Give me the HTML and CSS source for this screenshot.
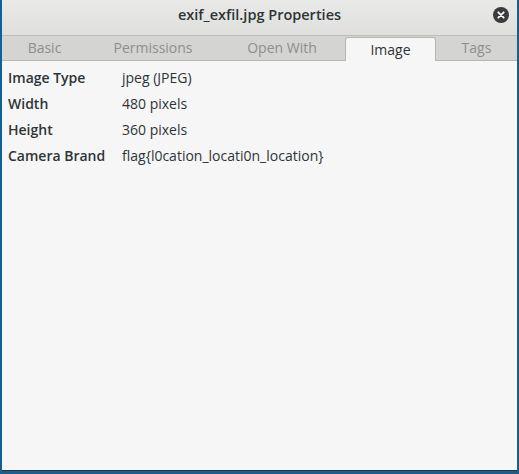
FILE: index.html
```html
<!DOCTYPE html>
<html>
<head>
<meta charset="utf-8">
<link rel="stylesheet" href="styles.css">
</head>
<body>
<div class="window">
  <div class="titlebar">
    <span class="title">exif_exfil.jpg Properties</span>
    <span class="close">
      <svg width="16" height="16" viewBox="0 0 16 16"><circle cx="8" cy="8" r="8" fill="#393b3c"/><path d="M5.3 5.3 L10.7 10.7 M10.7 5.3 L5.3 10.7" stroke="#fff" stroke-width="1.8" stroke-linecap="round"/></svg>
    </span>
  </div>
  <div class="tabs">
    <div class="tab tab-basic">Basic</div>
    <div class="tab tab-perm">Permissions</div>
    <div class="tab tab-open">Open With</div>
    <div class="tab tab-image active">Image</div>
    <div class="tab tab-tags">Tags</div>
  </div>
  <div class="content">
    <div class="grid">
      <div class="label">Image Type</div><div class="value">jpeg (JPEG)</div>
      <div class="label">Width</div><div class="value">480 pixels</div>
      <div class="label">Height</div><div class="value">360 pixels</div>
      <div class="label">Camera Brand</div><div class="value">flag{l0cation_locati0n_location}</div>
    </div>
  </div>
</div>
</body>
</html>
```

FILE: styles.css
```css
html, body {
  margin: 0;
  padding: 0;
  height: 474px;
  overflow: hidden;
}
body {
  background: #1a5f8c;
  font-family: "Open Sans", "Noto Sans", sans-serif;
  color: #2e3436;
  display: flex;
  flex-direction: column;
}
.window {
  margin: 0 2px 0 2px;
  height: 471px;
  display: flex;
  flex-direction: column;
  background: #f6f6f6;
  border-bottom: 1px solid #0f3d5c;
  box-sizing: border-box;
}
.titlebar {
  height: 35px;
  flex: none;
  background: linear-gradient(#e9e9e8, #dfdfdd);
  border-bottom: 1px solid #bdbdb9;
  display: flex;
  align-items: center;
  justify-content: center;
  position: relative;
}
.title {
  font-weight: 600;
  font-size: 14.5px;
  color: #2e3436;
  margin-top: -6px;
}
.close {
  position: absolute;
  right: 8px;
  top: 7px;
  width: 16px;
  height: 16px;
  display: block;
}
.close svg { display: block; }
.tabs {
  height: 24px;
  flex: none;
  display: flex;
  background: #d4d4d2;
  border-bottom: 1px solid #b6b6b3;
  align-items: flex-end;
}
.tab {
  flex: 0 0 auto;
  text-align: center;
  font-size: 14px;
  color: #8d8f8f;
  height: 23px;
  line-height: 22px;
  box-sizing: border-box;
}
.tab-basic { width: 85px; }
.tab-perm { width: 132px; }
.tab-open { width: 126px; }
.tab-image { width: 91px; }
.tab-tags { flex: 1 1 auto; }
.tab.active {
  background: #f6f6f6;
  color: #2e3436;
  border: 1px solid #b6b6b3;
  border-bottom: none;
  border-radius: 3px 3px 0 0;
  height: 24px;
  margin-bottom: -1px;
  line-height: 23px;
}
.content {
  flex: 1;
  padding: 3px 6px;
}
.grid {
  display: grid;
  grid-template-columns: 114px auto;
  grid-auto-rows: 26px;
  align-items: center;
  font-size: 14px;
}
.label {
  font-weight: 600;
}
```
